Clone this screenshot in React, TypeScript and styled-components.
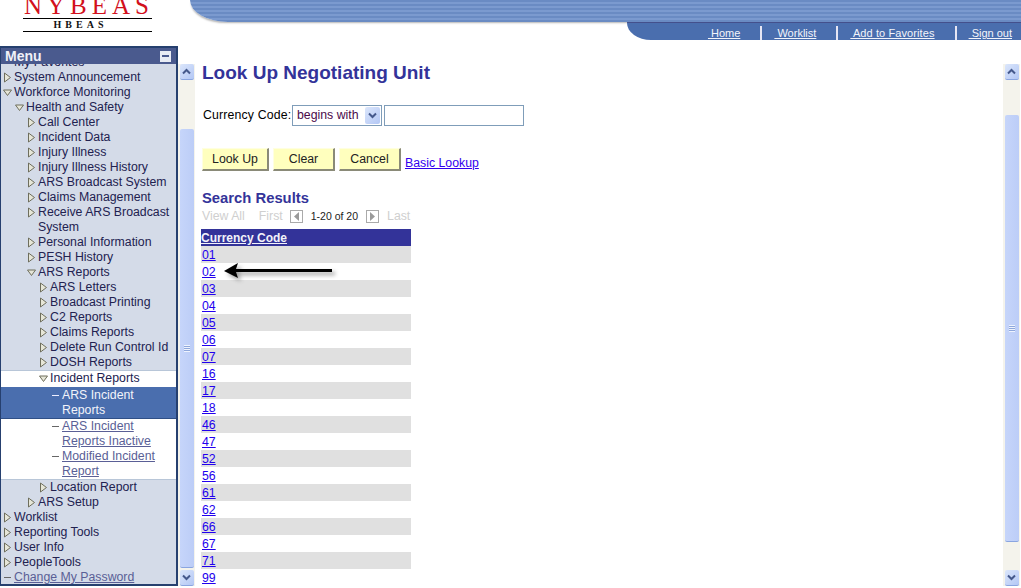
import React from "react";
import styled, { createGlobalStyle } from "styled-components";

const Global = createGlobalStyle`
  html, body { margin: 0; padding: 0; background: #fff; }
  body { font-family: "Liberation Sans", Arial, sans-serif; font-size: 12.3px; overflow: hidden; }
`;

const Page = styled.div`
  position: relative;
  width: 1021px;
  height: 588px;
  overflow: hidden;
  display: flex;
  flex-direction: column;
`;

const Header = styled.header`
  height: 46px;
  display: flex;
  flex: none;
`;

const Logo = styled.div`
  width: 129px;
  margin-left: 23px;
  height: 31px;
  overflow: hidden;
  border-bottom: 1px solid #000;
  display: flex;
  flex-direction: column;
  align-items: center;
  font-family: "Liberation Serif", serif;
`;

const LogoName = styled.div`
  height: 18px;
  width: 100%;
  flex: none;
  border-bottom: 1px solid #000;
  color: #d2101c;
  font-size: 25px;
  line-height: 18px;
  letter-spacing: 5px;
  text-align: center;
  white-space: nowrap;
  span { position: relative; top: -3px; left: 1px; }
`;

const LogoSub = styled.div`
  font-size: 10px;
  font-weight: bold;
  letter-spacing: 4px;
  line-height: 11px;
  color: #111;
  padding-right: 14px;
`;

const Banner = styled.div`
  flex: 1;
  margin-left: 38px;
  display: flex;
  flex-direction: column;
  align-items: flex-end;
`;

const Stripes = styled.div`
  width: 100%;
  height: 22px;
  flex: none;
  border-bottom-left-radius: 38px 22px;
  background: repeating-linear-gradient(180deg, #6a8bc3 0 2px, #7b9acf 2px 4px);
  box-shadow: 0 2px 2px -1px #b5b5b5;
`;

const Nav = styled.nav`
  width: 394px;
  height: 18px;
  flex: none;
  box-sizing: border-box;
  background: #4a6eae;
  border-top: 1px solid #44508c;
  border-bottom-left-radius: 24px 17px;
  display: flex;
  justify-content: flex-end;
  align-items: flex-end;
  padding-right: 9px;
`;

const NavLink = styled.a<{ $spread?: boolean }>`
  height: 14px;
  box-sizing: border-box;
  padding-right: 20px;
  margin-right: 12px;
  border-right: 2px solid #e6e6f4;
  color: #f2f4fa;
  font-size: 11px;
  letter-spacing: ${(p) => (p.$spread ? "0.1px" : "0")};
  line-height: 14px;
  text-decoration: underline;
  white-space: pre;
  &:last-child { padding-right: 0; margin-right: 0; border-right: none; }
`;

const Content = styled.div`
  flex: 1;
  display: flex;
  min-height: 0;
`;

const Menu = styled.aside`
  width: 178px;
  height: 540px;
  flex: none;
  box-sizing: border-box;
  border: 2px solid #26406f;
  border-top-width: 1px;
  border-left-width: 1px;
  background: #d4dbe8;
  display: flex;
  flex-direction: column;
  overflow: hidden;
`;

const MenuTitle = styled.div`
  height: 17px;
  flex: none;
  background: #4a5a8e;
  border-top: 1px solid #26406f;
  box-sizing: border-box;
  color: #f0f0f8;
  font-size: 14px;
  font-weight: bold;
  line-height: 17px;
  padding: 0 5px 0 4px;
  display: flex;
  justify-content: space-between;
  align-items: center;
`;

const Collapse = styled.span`
  width: 11px;
  height: 11px;
  background: #e8ecf4;
  display: flex;
  align-items: center;
  justify-content: center;
  &::before { content: ""; width: 7px; height: 2px; background: #4a5a8e; }
`;

const MenuList = styled.div`
  flex: 1;
  overflow: hidden;
`;

const ClipTop = styled.div`
  height: 6px;
  overflow: hidden;
  & > div { margin-top: -9px; }
`;

const Row = styled.div<{ $level: number }>`
  display: flex;
  align-items: flex-start;
  min-height: 15px;
  line-height: 15px;
  padding-left: ${(p) => 2 + p.$level * 12}px;
  color: #222250;
  white-space: nowrap;
`;

const RowIcon = styled.span`
  width: 9px;
  margin-right: 2px;
  flex: none;
  height: 15px;
  display: flex;
  align-items: center;
  justify-content: center;
`;

const RowText = styled.span<{ $link?: boolean; $white?: boolean }>`
  white-space: pre-line;
  color: ${(p) => (p.$white ? "#f2f4fa" : p.$link ? "#5a5f96" : "inherit")};
  text-decoration: ${(p) => (p.$link ? "underline" : "none")};
`;

const OpenSection = styled.div`
  background: #fff;
  border-top: 1px solid #b8c6d8;
  border-bottom: 1px solid #b8c6d8;
`;

const CurrentItem = styled.div`
  background: #4a6eae;
  border-bottom: 1px solid #2f4f86;
  margin-top: 1px;
  padding-top: 1px;
`;

const Bar = styled.div`
  width: 17px;
  flex: none;
  height: 522px;
  margin-top: 18px;
  background: #f4f3ec;
  display: flex;
  flex-direction: column;
  align-items: center;
`;

const BarButton = styled.div`
  width: 14px;
  height: 16px;
  flex: none;
  background: linear-gradient(135deg, #dbe6fb, #b3c7f5);
  border-bottom: 1px solid #8aa5e0;
  border-radius: 2px;
  box-sizing: border-box;
  display: flex;
  align-items: center;
  justify-content: center;
`;

const Thumb = styled.div<{ $gap: number; $size: number }>`
  width: 14px;
  flex: none;
  height: ${(p) => p.$size}px;
  margin-top: ${(p) => p.$gap}px;
  background: linear-gradient(90deg, #c6d5fa, #bccdf7);
  border-bottom: 1px solid #8aa5e0;
  border-radius: 2px;
  box-sizing: border-box;
  display: flex;
  align-items: center;
  justify-content: center;
`;

const Grip = styled.span`
  width: 6px;
  height: 7px;
  background: repeating-linear-gradient(180deg, #eef3fe 0 1px, #8fa8dc 1px 2px);
`;

const BarSpacer = styled.div`
  flex: 1;
`;

const BarGutter = styled.div`
  width: 1px;
  flex: none;
`;

const Main = styled.main`
  flex: 1;
  min-width: 0;
  padding: 16px 0 0 6px;
  overflow: hidden;
`;

const Title = styled.h1`
  margin: 0 0 0 1px;
  font-size: 19px;
  line-height: 22px;
  font-weight: bold;
  color: #333399;
`;

const SearchRow = styled.div`
  display: flex;
  align-items: center;
  margin: 20px 0 0 2px;
  height: 22px;
`;

const FieldLabel = styled.label`
  width: 89px;
  flex: none;
  color: #000;
  letter-spacing: 0.15px;
  white-space: nowrap;
`;

const SelectBox = styled.div`
  width: 90px;
  height: 21px;
  box-sizing: border-box;
  border: 1px solid #7f9db9;
  color: #4a0a4a;
  display: flex;
  align-items: center;
  justify-content: space-between;
  padding: 0 1px 0 4px;
`;

const SelectArrow = styled.span`
  width: 15px;
  height: 17px;
  border-radius: 2px;
  background: linear-gradient(135deg, #dbe6fb, #b3c7f5);
  display: flex;
  align-items: center;
  justify-content: center;
`;

const TextBox = styled.div`
  width: 140px;
  height: 21px;
  margin: 1px 0 0 2px;
  box-sizing: border-box;
  border: 1px solid #7f9db9;
`;

const Buttons = styled.div`
  display: flex;
  align-items: flex-end;
  gap: 4px;
  margin: 22px 0 0 1px;
`;

const Btn = styled.button<{ $width: number }>`
  width: ${(p) => p.$width}px;
  height: 23px;
  padding: 0;
  background: #ffffbe;
  border: 1px solid #ffffe0;
  border-right: 2px solid #8a8a78;
  border-bottom: 2px solid #8a8a78;
  color: #222;
  font-family: inherit;
  font-size: 12.3px;
`;

const BasicLink = styled.a`
  color: #3300ee;
  text-decoration: underline;
  margin-bottom: 1px;
`;

const Section = styled.h2`
  margin: 19px 0 0 1px;
  font-size: 14.8px;
  line-height: 17px;
  font-weight: bold;
  color: #333399;
`;

const Pager = styled.div`
  display: flex;
  align-items: center;
  height: 18px;
  margin-left: 1px;
  color: #cfcfcf;
`;

const PagerFirst = styled.span`
  margin-left: 14px;
`;

const PagerCount = styled.span`
  color: #222;
  font-size: 10.5px;
  margin: 0 8px;
`;

const PagerButton = styled.span<{ $ml: number; $mr?: number }>`
  width: 13px;
  height: 13px;
  box-sizing: border-box;
  border: 1px solid #aaa;
  margin-left: ${(p) => p.$ml}px;
  margin-right: ${(p) => p.$mr ?? 0}px;
  display: flex;
  align-items: center;
  justify-content: center;
`;

const Grid = styled.div`
  width: 210px;
  margin-top: 4px;
`;

const GridHead = styled.div`
  height: 17px;
  background: #333399;
  color: #f2f2fa;
  font-size: 12px;
  font-weight: bold;
  line-height: 18px;
  text-decoration: underline;
`;

const GridRow = styled.div<{ $odd: boolean }>`
  height: 17px;
  background: ${(p) => (p.$odd ? "#e0e0e0" : "#fff")};
  line-height: 18px;
  padding-left: 1px;
  a { color: #2200ee; text-decoration: underline; }
`;

const Callout = styled.svg`
  position: absolute;
  left: 220px;
  top: 260px;
`;

const Twisty = ({ open }: { open?: boolean }) => (
  <svg width="9" height="11" viewBox="0 0 9 11">
    <path
      d={open ? "M0.5 3 L8.5 3 L4.5 8.5 Z" : "M1.5 1 L7.5 5.5 L1.5 10 Z"}
      fill="#e6e6d8"
      stroke="#6e6e5c"
      strokeWidth="1"
    />
  </svg>
);

const Dash = ({ color }: { color: string }) => (
  <svg width="9" height="3" viewBox="0 0 9 3">
    <path d="M1 1.5 H8" stroke={color} strokeWidth="1" />
  </svg>
);

const Chevron = ({ up }: { up?: boolean }) => (
  <svg width="9" height="7" viewBox="0 0 9 7">
    <path d={up ? "M1 5.5 L4.5 2 L8 5.5" : "M1 1.5 L4.5 5 L8 1.5"} fill="none" stroke="#45598c" strokeWidth="2" />
  </svg>
);

const PageArrow = ({ right }: { right?: boolean }) => (
  <svg width="7" height="9" viewBox="0 0 7 9">
    <path d={right ? "M1 0 L6 4.5 L1 9 Z" : "M6 0 L1 4.5 L6 9 Z"} fill="#9a9a9a" />
  </svg>
);

type Item = { text: string; level: number; kind?: "open" | "closed" | "leaf" };

const beforeOpen: Item[] = [
  { text: "System Announcement", level: 0 },
  { text: "Workforce Monitoring", level: 0, kind: "open" },
  { text: "Health and Safety", level: 1, kind: "open" },
  { text: "Call Center", level: 2 },
  { text: "Incident Data", level: 2 },
  { text: "Injury Illness", level: 2 },
  { text: "Injury Illness History", level: 2 },
  { text: "ARS Broadcast System", level: 2 },
  { text: "Claims Management", level: 2 },
  { text: "Receive ARS Broadcast\nSystem", level: 2 },
  { text: "Personal Information", level: 2 },
  { text: "PESH History", level: 2 },
  { text: "ARS Reports", level: 2, kind: "open" },
  { text: "ARS Letters", level: 3 },
  { text: "Broadcast Printing", level: 3 },
  { text: "C2 Reports", level: 3 },
  { text: "Claims Reports", level: 3 },
  { text: "Delete Run Control Id", level: 3 },
  { text: "DOSH Reports", level: 3 },
];

const afterOpen: Item[] = [
  { text: "Location Report", level: 3 },
  { text: "ARS Setup", level: 2 },
  { text: "Worklist", level: 0 },
  { text: "Reporting Tools", level: 0 },
  { text: "User Info", level: 0 },
  { text: "PeopleTools", level: 0 },
];

const codes = ["01", "02", "03", "04", "05", "06", "07", "16", "17", "18", "46", "47", "52", "56", "61", "62", "66", "67", "71", "99"];

const MenuRow = ({ item }: { item: Item }) => (
  <Row $level={item.level}>
    <RowIcon>
      <Twisty open={item.kind === "open"} />
    </RowIcon>
    <RowText>{item.text}</RowText>
  </Row>
);

export default function App() {
  return (
    <Page>
      <Global />
      <Header>
        <Logo>
          <LogoName>
            <span>NYBEAS</span>
          </LogoName>
          <LogoSub>HBEAS</LogoSub>
        </Logo>
        <Banner>
          <Stripes />
          <Nav>
            <NavLink> Home</NavLink>
            <NavLink> Worklist</NavLink>
            <NavLink $spread> Add to Favorites</NavLink>
            <NavLink> Sign out</NavLink>
          </Nav>
        </Banner>
      </Header>
      <Content>
        <Menu>
          <MenuTitle>
            Menu
            <Collapse />
          </MenuTitle>
          <MenuList>
            <ClipTop>
              <Row $level={0}>
                <RowIcon />
                <RowText>My Favorites</RowText>
              </Row>
            </ClipTop>
            {beforeOpen.map((item) => (
              <MenuRow key={item.text} item={item} />
            ))}
            <OpenSection>
              <MenuRow item={{ text: "Incident Reports", level: 3, kind: "open" }} />
              <CurrentItem>
                <Row $level={4}>
                  <RowIcon><Dash color="#eef" /></RowIcon>
                  <RowText $white>{"ARS Incident\nReports"}</RowText>
                </Row>
              </CurrentItem>
              <Row $level={4}>
                <RowIcon><Dash color="#666" /></RowIcon>
                <RowText $link>{"ARS Incident\nReports Inactive"}</RowText>
              </Row>
              <Row $level={4}>
                <RowIcon><Dash color="#666" /></RowIcon>
                <RowText $link>{"Modified Incident\nReport"}</RowText>
              </Row>
            </OpenSection>
            {afterOpen.map((item) => (
              <MenuRow key={item.text} item={item} />
            ))}
            <Row $level={0}>
              <RowIcon><Dash color="#666" /></RowIcon>
              <RowText $link>Change My Password</RowText>
            </Row>
          </MenuList>
        </Menu>
        <Bar>
          <BarButton><Chevron up /></BarButton>
          <Thumb $gap={49} $size={439}><Grip /></Thumb>
          <BarSpacer />
          <BarButton><Chevron /></BarButton>
        </Bar>
        <Main>
          <Title>Look Up Negotiating Unit</Title>
          <SearchRow>
            <FieldLabel>Currency Code:</FieldLabel>
            <SelectBox>
              begins with
              <SelectArrow><Chevron /></SelectArrow>
            </SelectBox>
            <TextBox />
          </SearchRow>
          <Buttons>
            <Btn $width={67}>Look Up</Btn>
            <Btn $width={62}>Clear</Btn>
            <Btn $width={62}>Cancel</Btn>
            <BasicLink>Basic Lookup</BasicLink>
          </Buttons>
          <Section>Search Results</Section>
          <Pager>
            View All
            <PagerFirst>First</PagerFirst>
            <PagerButton $ml={7}><PageArrow /></PagerButton>
            <PagerCount>1-20 of 20</PagerCount>
            <PagerButton $ml={0} $mr={8}><PageArrow right /></PagerButton>
            Last
          </Pager>
          <Grid>
            <GridHead>Currency Code</GridHead>
            {codes.map((code, i) => (
              <GridRow key={code} $odd={i % 2 === 0}>
                <a>{code}</a>
              </GridRow>
            ))}
          </Grid>
        </Main>
        <Bar>
          <BarButton><Chevron up /></BarButton>
          <Thumb $gap={35} $size={427}><Grip /></Thumb>
          <BarSpacer />
          <BarButton><Chevron /></BarButton>
        </Bar>
        <BarGutter />
      </Content>
      <Callout width="120" height="26" viewBox="0 0 120 26">
        <defs>
          <filter id="arrow-shadow" x="-10%" y="-50%" width="120%" height="220%">
            <feDropShadow dx="3" dy="3" stdDeviation="2" floodColor="#000" floodOpacity="0.4" />
          </filter>
        </defs>
        <path d="M4 11 L18 3 L16 9 H112 V12 H16 L18 18 Z" fill="#000" filter="url(#arrow-shadow)" />
      </Callout>
    </Page>
  );
}
